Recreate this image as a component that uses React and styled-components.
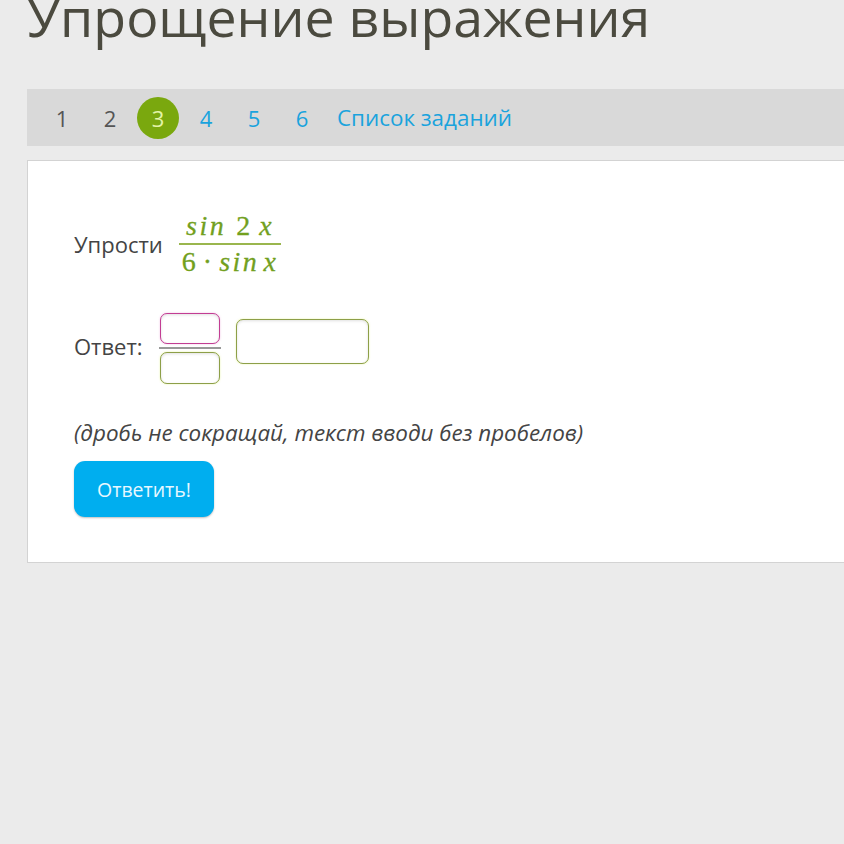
import React from "react";
import styled, { createGlobalStyle } from "styled-components";

const Global = createGlobalStyle`
  html, body { margin: 0; padding: 0; background: #ebebeb; overflow: hidden; }
  body { font-family: "Open Sans", "Liberation Sans", sans-serif; }
`;

const Page = styled.div`
  width: 900px;
  padding-left: 27px;
  box-sizing: border-box;
`;

const Title = styled.h1`
  margin: -9px 0 0 0;
  font-weight: 400;
  font-size: 53.6px;
  line-height: 52px;
  color: #4b4a3f;
  white-space: nowrap;
`;

const Nav = styled.nav`
  margin-top: 46px;
  height: 57px;
  background: #d9d9d9;
  display: flex;
  align-items: center;
  padding-left: 14px;
`;

const NavItem = styled.span`
  display: inline-flex;
  align-items: center;
  justify-content: center;
  min-width: 42px;
  height: 42px;
  margin-right: 6px;
  font-size: 22px;
  color: ${(p) => (p.$link ? "#1aa3dd" : "#555")};
  border-radius: 50%;
  ${(p) =>
    p.$active &&
    `
    background: #7aa80e;
    color: #e4f4a8;
  `}
`;

const ListLink = styled.span`
  margin-left: 8px;
  font-size: 22.4px;
  color: #1aa3dd;
`;

const Card = styled.section`
  margin-top: 14px;
  background: #fff;
  border: 1px solid #d3d3d3;
  padding: 48px 46px 46px;
  height: 403px;
  box-sizing: border-box;
`;

const Row = styled.div`
  display: flex;
  align-items: center;
  font-size: 22px;
  color: #444;
  margin-top: ${(p) => p.$mt || 0}px;
`;

const Label = styled.span`
  margin-right: ${(p) => p.$gap}px;
  margin-bottom: ${(p) => p.$lift || 0}px;
`;

const Frac = styled.span`
  display: inline-flex;
  flex-direction: column;
  align-items: center;
  font-family: "Liberation Serif", "DejaVu Serif", serif;
  color: #72a01e;
  font-size: 28px;
  -webkit-text-stroke: 0.3px #72a01e;
`;

const MathLine = styled.span`
  display: flex;
  align-items: baseline;
  padding: 0 3px;
  line-height: 34px;
  white-space: nowrap;
`;

const Var = styled.i`
  font-style: italic;
  letter-spacing: 0.09em;
  margin-left: ${(p) => p.$ml || 0}px;
`;

const Sym = styled.span`
  margin-left: ${(p) => p.$ml || 0}px;
`;

const Bar = styled.span`
  align-self: stretch;
  height: 2px;
  background: #9ab64e;
`;

const InputFrac = styled.span`
  display: inline-flex;
  flex-direction: column;
  align-items: center;
  gap: 3px;
  margin-right: 15px;
`;

const Box = styled.span`
  display: block;
  width: ${(p) => p.$w}px;
  height: ${(p) => p.$h}px;
  margin-bottom: ${(p) => p.$lift || 0}px;
  box-sizing: border-box;
  border: 1.5px solid ${(p) => (p.$pink ? "#c23d93" : "#8d9f48")};
  border-radius: 7px;
  background: #fff;
  box-shadow: inset 0 1px 3px rgba(0,0,0,0.12), 0 0 2px ${(p) => (p.$pink ? "rgba(230,120,200,0.5)" : "rgba(220,240,120,0.7)")};
`;

const FracLine = styled.span`
  width: 62px;
  height: 2px;
  background: #999;
`;

const Hint = styled.p`
  margin: 34px 0 0;
  font-style: italic;
  font-size: 22.4px;
  line-height: 30px;
  color: #444;
`;

const Button = styled.button`
  margin-top: 13px;
  width: 140px;
  height: 56px;
  border: none;
  border-radius: 11px;
  background: #00aeef;
  color: #e8f8ff;
  font-family: "Open Sans", sans-serif;
  font-size: 19.5px;
  box-shadow: 0 1px 2px rgba(0,0,0,0.25);
`;

export default function App() {
  const items = ["1", "2", "3", "4", "5", "6"];
  return (
    <Page>
      <Global />
      <Title>Упрощение выражения</Title>
      <Nav>
        {items.map((t, i) => (
          <NavItem key={t} $active={i === 2} $link={i > 2}>
            {t}
          </NavItem>
        ))}
        <ListLink>Список заданий</ListLink>
      </Nav>
      <Card>
        <Row>
          <Label $gap={16}>Упрости</Label>
          <Frac>
            <MathLine>
              <Var>sin</Var>
              <Sym $ml={10}>2</Sym>
              <Var $ml={9}>x</Var>
            </MathLine>
            <Bar />
            <MathLine>
              <Sym>6</Sym>
              <Sym $ml={7}>·</Sym>
              <Var $ml={7}>sin</Var>
              <Var $ml={4}>x</Var>
            </MathLine>
          </Frac>
        </Row>
        <Row $mt={34}>
          <Label $gap={16} $lift={6}>Ответ:</Label>
          <InputFrac>
            <Box $pink $w={60} $h={31} />
            <FracLine />
            <Box $w={60} $h={32} />
          </InputFrac>
          <Box $w={133} $h={45} $lift={14} />
        </Row>
        <Hint>(дробь не сокращай, текст вводи без пробелов)</Hint>
        <Button>Ответить!</Button>
      </Card>
    </Page>
  );
}
